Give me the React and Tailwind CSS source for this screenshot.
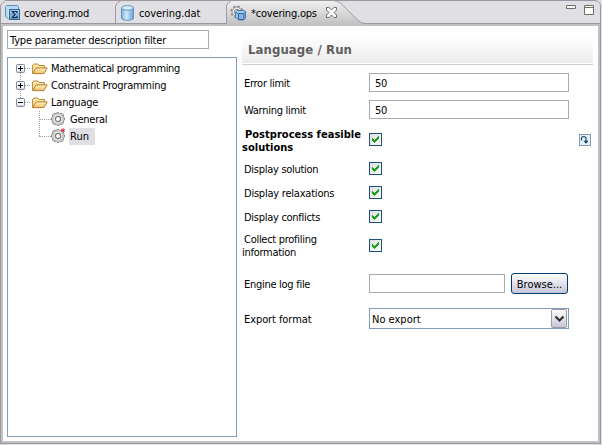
import React from 'react';

function Check({ cls = '' }) {
  return (
    <svg width="13" height="13" viewBox="0 0 13 13" className={'block shrink-0 ' + cls} shapeRendering="crispEdges">
      <defs>
        <linearGradient id="ck" x1="0" y1="0" x2="1" y2="1">
          <stop offset="0" stopColor="#dcdcd7" />
          <stop offset="1" stopColor="#ffffff" />
        </linearGradient>
      </defs>
      <rect x=".5" y=".5" width="12" height="12" fill="url(#ck)" stroke="#1c5180" />
      <path d="M3 5h1v1h1v1h1v-1h1v-1h1v-1h1v-1h1v3h-1v1h-1v1h-1v1h-1v1h-1v-1h-1v-1h-1z" fill="#21a121" />
    </svg>
  );
}

function Toggle({ open }) {
  return (
    <svg width="9" height="9" viewBox="0 0 9 9" className="block shrink-0">
      <rect x=".5" y=".5" width="8" height="8" rx="1" fill="#f5f4f8" stroke="#7d8a9c" />
      <path d="M1 7h7v1H1z" fill="#d2d1dc" />
      <path d={open ? 'M2 4h5v1H2z' : 'M2 4h2V2h1v2h2v1H5v2H4V5H2z'} fill="#000" />
    </svg>
  );
}

function Folder() {
  return (
    <svg width="16" height="14" viewBox="0 0 16 14" className="block shrink-0">
      <defs>
        <linearGradient id="fo" x1="0" y1="0" x2="0" y2="1">
          <stop offset="0" stopColor="#fff3c4" />
          <stop offset="1" stopColor="#efc267" />
        </linearGradient>
      </defs>
      <path d="M.6 11.5V3.2L1.8 2h4l1.3 1.5h5.3v2.6" fill="#fbe6a6" stroke="#b8863b" />
      <path d="M.8 11.6 4 5.9h11.2l-3.3 5.7z" fill="url(#fo)" stroke="#b67b2c" />
    </svg>
  );
}

function Gear({ marked }) {
  return (
    <svg width="15" height="15" viewBox="0 0 15 15" className="block shrink-0 overflow-visible">
      <path d="M5 1.5 6 .7h2l1 1 2-.4 1.5 1.5-.2 2 1.2 1v2.3l-1.2 1 .2 1.8-1.6 1.6-1.9-.2-1 1H6l-1-1-2 .2-1.5-1.6.2-1.8-1.2-1V5.8l1.2-1-.2-2L3 1.3z" fill="#c9c9c9" stroke="#8c8c8c" />
      <circle cx="7" cy="7" r="4.4" fill="#e8e8e8" />
      <circle cx="7" cy="7" r="2.6" fill="#fff" stroke="#777" strokeWidth="1.2" />
      {marked && <path d="M12-.8v4M10.200.300l3.600 2M10.200 2.300l3.600-2" stroke="#e8203c" strokeWidth="1" />}
    </svg>
  );
}

function ModelIcon() {
  return (
    <svg width="16" height="16" viewBox="0 0 16 16" className="block shrink-0">
      <path d="M.5 1.5 2 .5h10.5l1 1V5L5 14.5l-4.5-3z" fill="#b7d7ee" stroke="#5d91bb" />
      <path d="M1 1.5 4 4.5M4 4.5h8M4 4.5v9" stroke="#e5f4fc" fill="none" />
      <rect x="4.5" y="4.5" width="10" height="10" fill="#7fb0d6" stroke="#346899" />
      <rect x="5" y="5" width="9" height="3" fill="#a5cce6" />
      <path d="M12 8V6.5H7.3L10 9.5l-2.7 3.2H12V11" fill="none" stroke="#102c5a" strokeWidth="1.2" />
    </svg>
  );
}

function DataIcon() {
  return (
    <svg width="13" height="16" viewBox="0 0 13 16" className="block shrink-0">
      <defs>
        <linearGradient id="cy">
          <stop offset="0" stopColor="#7eaed6" />
          <stop offset=".4" stopColor="#cfebf9" />
          <stop offset="1" stopColor="#6f9fd0" />
        </linearGradient>
      </defs>
      <path d="M.5 3v10c0 3 12 3 12 0V3" fill="url(#cy)" stroke="#5f8fc0" />
      <ellipse cx="6.5" cy="2.9" rx="6" ry="2.3" fill="#d3edf8" stroke="#5f93c0" />
    </svg>
  );
}

function OpsIcon() {
  return (
    <svg width="16" height="16" viewBox="0 0 16 16" className="block shrink-0">
      <circle cx="6.8" cy="6.8" r="5.5" fill="#d9d9d9" stroke="#8f8f8f" strokeWidth="1.8" strokeDasharray="2.5 1.8" />
      <circle cx="6.8" cy="6.8" r="4.6" fill="#eee" stroke="#a0a0a0" />
      <circle cx="6.8" cy="6.8" r="2.4" fill="#fff" stroke="#777" />
      <path d="m5.5 7.5 1.5-2h7.500l1 1v6.500l-2 2h-5l-3-3z" fill="#a5cbea" stroke="#4477b3" />
      <path d="M8.500 8.500h5.500v6H8.500z" fill="#86b3e1" stroke="#3567a5" />
      <path d="m5.500 7.500 3 1.500M14 8.500l1.500-2" stroke="#4477b3" />
    </svg>
  );
}

function Tabs() {
  return (
    <div className="relative h-[26px] bg-[#e0dfe3]">
      <svg width="602" height="26" viewBox="0 0 602 26" className="absolute left-0 top-0">
        <defs>
          <linearGradient id="tb" x1="0" y1="0" x2="0" y2="1">
            <stop offset="0" stopColor="#f1f1f2" />
            <stop offset="1" stopColor="#c0c0c0" />
          </linearGradient>
        </defs>
        <path d="M1 24h600v2H1z" fill="#c0c0c0" />
        <path d="M.5 26V6l1-2 2-2 2-1.500H595l3 1 2 2 .5 2.500v20M1 23.500h600M115.500 23V6l1-2 2-2 2-1" fill="none" stroke="#9b999f" />
        <path d="M226.500 25V6l1-2 2-2 2-1.500H331c5 0 8 1 12 5l13 13c4 4 7 5 11 5.500V25z" fill="url(#tb)" />
        <path d="M226.500 24V6l1-2 2-2 2-1.500H331c5 0 8 1 12 5l13 13c4 4 7 5 11 5" fill="none" stroke="#9b999f" />
      </svg>
      <div className="relative flex h-6 items-center whitespace-nowrap pl-[5px] pt-[2px]">
        <div className="flex w-[116px] items-center gap-[3px]">
          <ModelIcon /><span className="tracking-[-0.25px]">covering.mod</span>
        </div>
        <div className="flex w-[109px] items-center gap-[5px]">
          <DataIcon /><span className="tracking-[-0.08px]">covering.dat</span>
        </div>
        <div className="flex w-[96px] items-center gap-[5px]">
          <OpsIcon /><span className="tracking-[-0.2px]">*covering.ops</span>
        </div>
        <svg width="11" height="11" viewBox="0 0 11 11" className="-mt-px block">
          <path d="M.5.5h2.500l2.500 2.500L8 .5h2.500V3L8 5.500 10.500 8v2.500H8L5.500 8 3 10.500H.5V8L3 5.500.5 3z" fill="#fff" stroke="#6e6c68" />
        </svg>
      </div>
      <svg width="30" height="12" viewBox="0 0 30 12" className="absolute left-[565px] top-[4px]">
        <path d="M1.500 1.500h9v3h-9zM19.500 1.500h9v9h-9zM19.500 3.500h9" fill="#fff" stroke="#716f64" />
      </svg>
    </div>
  );
}

function Branch({ label, open, cls }) {
  return (
    <div className="flex h-[17px] items-center pl-2">
      <Toggle open={open} />
      <div className="mr-[2px] w-[5px] border-t border-dotted border-[#a0a0a0]" />
      <Folder />
      <span className={'ml-[3px] ' + cls}>{label}</span>
    </div>
  );
}

function Leaf({ label, marked, cls, box }) {
  return (
    <div className="flex h-[17px] items-center pl-[31px]">
      <div className="w-[12px] border-t border-dotted border-[#a0a0a0]" />
      <Gear marked={marked} />
      <span className={'ml-[3px] flex h-[17px] items-center pl-px ' + box}><span className={cls}>{label}</span></span>
    </div>
  );
}

function Row({ h, label, second, children, cls = 'tracking-[-0.28px]', indent = 'pl-[2px]' }) {
  return (
    <div className={'flex items-center ' + h}>
      <div className={'w-[127px] shrink-0 whitespace-nowrap pt-[2px] leading-[13px] ' + cls}>
        <div className={indent}>{label}</div>
        {second && <div>{second}</div>}
      </div>
      {children}
    </div>
  );
}

export default function App() {
  return (
    <div className="h-[445px] w-[602px] overflow-hidden bg-[#e0dfe3] text-[11px] leading-[13px] text-black [font-family:'DejaVu_Sans_Condensed','DejaVu_Sans',sans-serif]">
      <Tabs />
      <div className="h-[418px] w-[601px] border-x border-b border-[#9b999f]">
        <div className="flex h-[417px] border-x-2 border-b-2 border-[#c0c0c0] bg-white pl-[4px]">
          <div className="w-[230px] shrink-0 pt-[4px]">
            <div className="flex h-[19px] w-[202px] items-center border border-[#a5acb2] pl-[2px] pt-px whitespace-nowrap">
              <span className="tracking-[-0.19px]">Type parameter description filter</span>
            </div>
            <div className="relative mt-[8px] h-[380px] border border-[#7f9db9] pt-[2px]">
              <div className="absolute left-[12px] top-[15px] h-[25px] border-l border-dotted border-[#a0a0a0]" />
              <div className="absolute left-[31px] top-[53px] h-[25px] border-l border-dotted border-[#a0a0a0]" />
              <div className="relative">
                <Branch label="Mathematical programming" cls="tracking-[-0.37px]" />
                <Branch label="Constraint Programming" cls="tracking-[-0.27px]" />
                <Branch label="Language" open cls="tracking-[-0.2px]" />
                <Leaf label="General" cls="tracking-[-0.25px]" box="" />
                <Leaf label="Run" marked cls="" box="w-[26px] bg-[#e0dfe3]" />
              </div>
            </div>
          </div>
          <div className="ml-[5px] w-[351px] pt-[10px]">
            <div className="flex h-[27px] items-center bg-gradient-to-b from-white to-[#ececec] pl-[6px] text-[13px] font-bold text-[#5f5d60]">
              <span className="tracking-[0.1px]">Language / Run</span>
            </div>
            <div className="mt-px h-px bg-[#cfcfcf]" />
            <div className="pt-[4px]">
              <Row h="h-[27px]" label="Error limit">
                <div className="flex h-[19px] w-[200px] items-center border border-[#a5acb2] pl-[5px] pt-px tracking-[-0.2px]">50</div>
              </Row>
              <Row h="h-[27px]" label="Warning limit">
                <div className="flex h-[19px] w-[200px] items-center border border-[#a5acb2] pl-[5px] pt-px tracking-[-0.2px]">50</div>
              </Row>
              <Row h="h-[33px]" label="Postprocess feasible" second="solutions" cls="font-bold tracking-[0.03px]" indent="pl-[3px]">
                <Check />
                <svg width="12" height="12" viewBox="0 0 12 12" className="ml-[197px] block">
                  <rect x=".5" y=".5" width="11" height="11" fill="#e2f4fb" stroke="#8b95b5" />
                  <path d="M2.500 6.500V4l1-1.300h2.500L7 4v4" fill="none" stroke="#12385e" strokeWidth="1.100" />
                  <path d="M4.500 6.800h5L7 9.800z" fill="#12385e" />
                </svg>
              </Row>
              <Row h="h-[24px]" label="Display solution"><Check cls="mt-px" /></Row>
              <Row h="h-[24px]" label="Display relaxations" cls="tracking-[-0.22px]"><Check cls="mt-px" /></Row>
              <Row h="h-[24px]" label="Display conflicts"><Check cls="mt-px" /></Row>
              <Row h="h-[34px]" label="Collect profiling" second="information"><Check cls="mt-px" /></Row>
              <div className="pt-[11px]">
                <Row h="h-[21px]" label="Engine log file">
                  <div className="h-[19px] w-[136px] border border-[#a5acb2]" />
                  <div className="ml-[6px] flex h-[21px] w-[57px] items-center justify-center rounded-[3px] border border-[#003c74] bg-gradient-to-b from-white to-[#c6c5d7] pt-px">Browse...</div>
                </Row>
              </div>
              <div className="pt-[14px]">
                <Row h="h-[21px]" label="Export format" cls="tracking-[-0.08px]">
                  <div className="flex h-[21px] w-[200px] items-center justify-between border border-[#7f9db9] pl-[2px]">
                    <span className="pt-px">No export</span>
                    <svg width="17" height="19" viewBox="0 0 17 19" className="block">
                      <defs>
                        <linearGradient id="dd" x1="0" y1="0" x2="0" y2="1">
                          <stop offset="0" stopColor="#fff" />
                          <stop offset="1" stopColor="#c6c5d7" />
                        </linearGradient>
                      </defs>
                      <rect x=".5" y=".5" width="15" height="18" rx="1.500" fill="url(#dd)" stroke="#9a99aa" />
                      <path d="m4.500 7.500 4 4 4-4" fill="none" stroke="#333" strokeWidth="2.200" />
                    </svg>
                  </div>
                </Row>
              </div>
            </div>
          </div>
        </div>
      </div>
    </div>
  );
}
